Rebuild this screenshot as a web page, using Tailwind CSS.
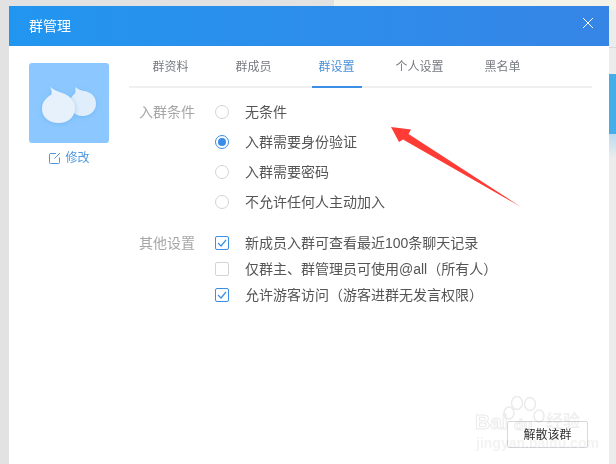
<!DOCTYPE html>
<html lang="zh-CN">

<head>
    <meta charset="UTF-8">
    <title>群管理</title>
    <script src="https://cdn.jsdelivr.net/npm/@tailwindcss/browser@4"></script>
</head>

<body class="relative w-[616px] h-[464px] overflow-hidden bg-[#e2e2e2] font-['Liberation_Sans','Noto_Sans_CJK_SC',sans-serif] [text-spacing-trim:space-all]">
    <!-- page behind the dialog -->
    <div class="absolute left-[334px] top-0 w-[282px] h-[10px] bg-[#f4f3ea]"></div>
    <div class="absolute left-[609px] top-[10px] w-[7px] h-[454px] bg-[#ececec]"></div>
    <div class="absolute left-[609px] top-[47px] w-[7px] h-[1px] bg-[#d8d8d8]"></div>
    <div class="absolute left-[609px] top-[74px] w-[7px] h-[60px] bg-[#45aeea]"></div>
    <div class="absolute left-[609px] top-[134px] w-[7px] h-[24px] bg-gradient-to-b from-[#bcdcf0] to-[#ececec]"></div>

    <!-- dialog -->
    <div class="absolute left-[9px] top-[6px] w-[600px] h-[458px] bg-white flex flex-col">
        <div class="h-[40px] shrink-0 flex items-center justify-between pl-[20px] pr-[16px] bg-gradient-to-r from-[#2196f0] to-[#3585e6] text-white text-[14px]">
            <span>群管理</span>
            <svg width="10" height="10" viewBox="0 0 10 10" class="-mt-[6px]" fill="none" stroke="white" stroke-width="1">
                <path d="M0 0l10 10M10 0L0 10" />
            </svg>
        </div>

        <div class="flex flex-1 min-h-0">
            <!-- avatar column -->
            <div class="w-[120px] shrink-0 pl-[20px] pt-[17px] flex flex-col">
                <div class="w-[80px] h-[80px] rounded-[3px] bg-[#8cc8ff]">
                    <svg width="80" height="80" viewBox="0 0 80 80">
                        <defs>
                            <filter id="soft" x="-30%" y="-30%" width="160%" height="160%">
                                <feDropShadow dx="0" dy="1" stdDeviation="2.500" flood-color="#5ea8e8" flood-opacity="0.55" />
                            </filter>
                        </defs>
                        <path filter="url(#soft)" fill="#e0eefb" d="M46 24c3 2.500 6 3.500 9 4 7 1 12 5.500 12 12.500 0 7.500-6 12.500-13 12.500-5 0-9-2-12-6-3-6-1-13 4-16.500 .8-2.500 .8-4.500 0-6.500z" />
                        <path filter="url(#soft)" fill="#e6f1fc" d="M21 24c3 2.500 8 4.500 12 6 8 2.500 13 8 13 15.500 0 9-8 14.500-16 14.500-10 0-17-6-17-14 0-7 4-11 9.500-14.500 .5-2.500 .2-5-1.500-7.500z" />
                    </svg>
                </div>
                <div class="mt-[9px] w-[80px] flex items-center justify-center gap-[4px] pl-[1px] text-[12px] leading-[12px] text-[#4f97e0]">
                    <svg width="12" height="12" viewBox="0 0 12 12" fill="none" stroke="#4f97e0" stroke-width="1">
                        <path d="M7 1.500H1.500a1 1 0 0 0-1 1v8a1 1 0 0 0 1 1h8a1 1 0 0 0 1-1V5.500" />
                        <path d="M5.500 6.500L11 1" />
                    </svg>
                    <span>修改</span>
                </div>
            </div>

            <!-- main column -->
            <div class="w-[463px] flex flex-col">
                <div class="h-[42px] shrink-0 border-b-2 border-[#f0f0f0] flex text-[12px] text-[#777a80]">
                    <div class="w-[83px] pt-[12px] text-center leading-[18px]">群资料</div>
                    <div class="w-[83px] pt-[12px] text-center leading-[18px]">群成员</div>
                    <div class="w-[83px] text-center leading-[18px] text-[#4a90d9] flex justify-center">
                        <span class="w-[50px] h-[42px] pt-[12px] border-b-2 border-[#3a8ee6]">群设置</span>
                    </div>
                    <div class="w-[83px] pt-[12px] text-center leading-[18px]">个人设置</div>
                    <div class="w-[83px] pt-[12px] text-center leading-[18px]">黑名单</div>
                </div>

                <!-- join condition -->
                <div class="flex mt-[9px] text-[14px] leading-[30px] text-[#555555]">
                    <div class="w-[86px] pl-[10px] text-[#a6a6a6]">入群条件</div>
                    <div class="flex flex-col">
                        <label class="h-[30px] flex items-center"><span class="w-[14px] h-[14px] rounded-full border border-[#d4d4d4]"></span><span class="ml-[16px]">无条件</span></label>
                        <label class="h-[30px] flex items-center"><span class="w-[14px] h-[14px] rounded-full border border-[#3a8ee6] flex items-center justify-center"><span class="w-[8px] h-[8px] rounded-full bg-[#3a8ee6]"></span></span><span class="ml-[16px]">入群需要身份验证</span></label>
                        <label class="h-[30px] flex items-center"><span class="w-[14px] h-[14px] rounded-full border border-[#d4d4d4]"></span><span class="ml-[16px]">入群需要密码</span></label>
                        <label class="h-[30px] flex items-center"><span class="w-[14px] h-[14px] rounded-full border border-[#d4d4d4]"></span><span class="ml-[16px]">不允许任何人主动加入</span></label>
                    </div>
                </div>

                <!-- other settings -->
                <div class="flex mt-[13px] text-[14px] text-[#555555]">
                    <div class="w-[86px] pl-[10px] leading-[26px] text-[#a6a6a6]">其他设置</div>
                    <div class="flex flex-col">
                        <label class="h-[26px] flex items-center">
                            <span class="w-[14px] h-[14px] rounded-[2px] border border-[#3a8ee6] flex items-center justify-center">
                                <svg width="10" height="8" viewBox="0 0 10 8" fill="none" stroke="#3a8ee6" stroke-width="1.200"><path d="M1 4l3 3 5-6" /></svg>
                            </span>
                            <span class="ml-[16px]">新成员入群可查看最近100条聊天记录</span>
                        </label>
                        <label class="h-[26px] flex items-center">
                            <span class="w-[14px] h-[14px] rounded-[2px] border border-[#d4d4d4]"></span>
                            <span class="ml-[16px]">仅群主、群管理员可使用@all<span lang="zh-TW" class="font-['Noto_Sans_CJK_TC',sans-serif]">（</span>所有人<span lang="zh-TW" class="font-['Noto_Sans_CJK_TC',sans-serif]">）</span></span>
                        </label>
                        <label class="h-[26px] flex items-center">
                            <span class="w-[14px] h-[14px] rounded-[2px] border border-[#3a8ee6] flex items-center justify-center">
                                <svg width="10" height="8" viewBox="0 0 10 8" fill="none" stroke="#3a8ee6" stroke-width="1.200"><path d="M1 4l3 3 5-6" /></svg>
                            </span>
                            <span class="ml-[16px]">允许游客访问<span lang="zh-TW" class="font-['Noto_Sans_CJK_TC',sans-serif]">（</span>游客进群无发言权限<span lang="zh-TW" class="font-['Noto_Sans_CJK_TC',sans-serif]">）</span></span>
                        </label>
                    </div>
                </div>

                <div class="flex justify-end mt-auto mb-[16px] mr-[4px]">
                    <button class="w-[81px] h-[27px] rounded-[2px] border border-[#d8d8de] text-[12px] text-[#333333]">解散该群</button>
                </div>
            </div>
        </div>
    </div>

    <!-- annotation arrow -->
    <svg class="absolute left-0 top-0" width="616" height="464" viewBox="0 0 616 464">
        <path fill="#ff3b36" d="M391 127L411 129.500 408.500 134 521 207 403 139.500 399 142z" />
    </svg>

    <!-- baidu jingyan watermark -->
    <div class="absolute left-[472px] top-[396px] w-[116px] h-[56px] pointer-events-none mix-blend-multiply font-bold text-white">
        <span class="absolute left-[3px] top-[14px] text-[21px] leading-[24px] [-webkit-text-stroke:1px_#ebebeb]">Bai</span>
        <span class="absolute left-[42px] top-[20px] text-[15px] leading-[18px] [-webkit-text-stroke:1px_#ebebeb]">du</span>
        <span class="absolute left-[74px] top-[15px] text-[17px] leading-[22px] text-[#f0f0f0]">经验</span>
        <span class="absolute left-[4px] top-[39px] text-[14px] leading-[16px] text-[#f3f3f3]">jingyan.baidu.com</span>
        <svg class="absolute left-[30px] top-0" width="44" height="40" viewBox="0 0 44 40" fill="none" stroke="#ebebeb" stroke-width="1.500">
            <ellipse cx="7" cy="17" rx="5" ry="6" />
            <ellipse cx="15" cy="7" rx="5.500" ry="6.500" />
            <ellipse cx="28" cy="8" rx="5.500" ry="6.500" />
            <ellipse cx="37" cy="20" rx="5" ry="6" />
        </svg>
    </div>
</body>

</html>
